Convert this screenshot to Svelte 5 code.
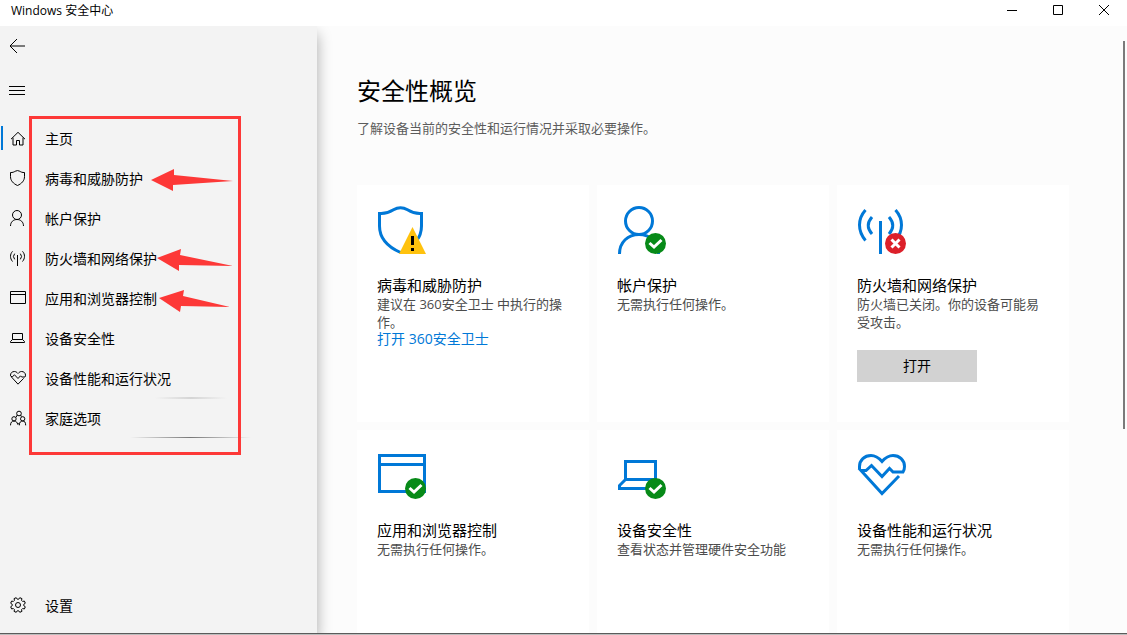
<script lang="ts">
	type Badge = 'warn' | 'ok' | 'error' | '';

	// outline icons, all on a 48 unit grid
	const icons: Record<string, string> = {
		home: 'M3 27.5L24 7L45 27.5M9 23V45H19.5V31.5H28.5V45H39V23',
		shield: 'M1.5 7.5C8 8 12 6 15.5 3.8Q22.5 -0.5 29.5 3.8C33 6 37 8 43.5 7.5V20C43.5 32 35 41 22.5 46.5C10 41 1.5 32 1.5 20Z',
		person: 'M21 1.5A13.5 13.5 0 1 1 21 28.5A13.5 13.5 0 1 1 21 1.5ZM1.5 48C1.5 36 10 28.5 21 28.5S40.5 36 40.5 48',
		network: 'M22.5 15V48M14 11Q6.5 19.5 14 28M31 11Q38.5 19.5 31 28M7.5 4C-0.5 13 -0.5 25 7.5 34.5M37.5 4C45.5 13 45.5 25 37.5 34.5',
		browser: 'M1.5 4.5H46.5V40.5H1.5ZM1.5 13.5H46.5',
		laptop: 'M7.5 28.5V10.5H37.5V28.5ZM7.5 28.5L1.5 34.5V37.5H43.5V34.5L37.5 28.5',
		heart: 'M1.5 18V15.5C1.5 9 6.5 4.5 13 4.5C17 4.5 20 6 24 10.5C28 6 31 4.5 35 4.5C41.5 4.5 46.5 9 46.5 15.5C46.5 18 46 19.5 45 21H35L31.5 17.5L24 25.5L13.5 14.5L8 19.5H3L24 42.5L41 25',
		family: 'M27 3.5A7 7 0 1 1 27 17.5A7 7 0 1 1 27 3.5ZM12 20A6.5 6.5 0 1 1 12 33A6.5 6.5 0 1 1 12 20ZM38 20A6.5 6.5 0 1 1 38 33A6.5 6.5 0 1 1 38 20ZM1.5 46C1.5 37 6 33 12 33S22 37 23 43M28 46C28 37 32 33 38 33S47 37 47 46M22 15L18 22M32 15L34 20M23 43L28 40',
		gear: cog(8) + 'M24 16.5A7.5 7.5 0 1 1 24 31.5A7.5 7.5 0 1 1 24 16.5Z'
	};

	function cog(teeth: number) {
		const step = (Math.PI * 2) / teeth;
		const points: string[] = [];
		for (let i = 0; i < teeth; i++) {
			for (const [offset, r] of [[-0.34, 17.5], [-0.2, 22.5], [0.2, 22.5], [0.34, 17.5]]) {
				const a = (i + 0.5 + offset) * step;
				points.push(`${(24 + r * Math.cos(a)).toFixed(1)} ${(24 + r * Math.sin(a)).toFixed(1)}`);
			}
		}
		return `M${points.join('L')}Z`;
	}

	const nav = [
		{ icon: 'home', label: '主页' },
		{ icon: 'shield', label: '病毒和威胁防护' },
		{ icon: 'person', label: '帐户保护' },
		{ icon: 'network', label: '防火墙和网络保护' },
		{ icon: 'browser', label: '应用和浏览器控制' },
		{ icon: 'laptop', label: '设备安全性' },
		{ icon: 'heart', label: '设备性能和运行状况' },
		{ icon: 'family', label: '家庭选项' }
	];

	const cards: { icon: string; badge: Badge; title: string; text: string; link?: string; action?: string }[] = [
		{ icon: 'shield', badge: 'warn', title: '病毒和威胁防护', text: '建议在 360安全卫士 中执行的操作。', link: '打开 360安全卫士' },
		{ icon: 'person', badge: 'ok', title: '帐户保护', text: '无需执行任何操作。' },
		{ icon: 'network', badge: 'error', title: '防火墙和网络保护', text: '防火墙已关闭。你的设备可能易受攻击。', action: '打开' },
		{ icon: 'browser', badge: 'ok', title: '应用和浏览器控制', text: '无需执行任何操作。' },
		{ icon: 'laptop', badge: 'ok', title: '设备安全性', text: '查看状态并管理硬件安全功能' },
		{ icon: 'heart', badge: '', title: '设备性能和运行状况', text: '无需执行任何操作。' }
	];

	let current = $state('home');
</script>

{#snippet glyph(name: string)}
	<svg class="glyph" viewBox="0 0 48 48" aria-hidden="true"><path d={icons[name]} /></svg>
{/snippet}

<div class="window">
	<header>
		<span class="caption">Windows 安全中心</span>
		<div class="controls">
			<button aria-label="最小化"><svg viewBox="0 0 10 10"><path d="M0 5.5H10" /></svg></button>
			<button aria-label="最大化"><svg viewBox="0 0 10 10"><path d="M.5 .5H9.5V9.5H.5Z" /></svg></button>
			<button aria-label="关闭"><svg viewBox="0 0 10 10"><path d="M0 0L10 10M10 0L0 10" /></svg></button>
		</div>
	</header>

	<div class="body">
		<aside>
			<button class="tool" aria-label="后退">
				<svg viewBox="0 0 16 16"><path d="M16 8H1M8 1L1 8L8 15" /></svg>
			</button>
			<button class="tool" aria-label="菜单">
				<svg viewBox="0 0 16 16"><path d="M0 4.5H16M0 8.5H16M0 12.5H16" /></svg>
			</button>

			<nav>
				{#each nav as item}
					<a href="#{item.icon}" class:active={current === item.icon} onclick={() => (current = item.icon)}>
						{@render glyph(item.icon)}
						<span>{item.label}</span>
					</a>
				{/each}

				<svg class="marks" viewBox="0 0 222 339" aria-hidden="true">
					<defs>
						<linearGradient id="streak">
							<stop offset="0" stop-color="#777" stop-opacity="0" />
							<stop offset=".5" stop-color="#777" />
							<stop offset="1" stop-color="#777" stop-opacity="0" />
						</linearGradient>
					</defs>
					<rect x="126" y="281" width="72" height="2" fill="url(#streak)" opacity=".25" />
					<rect x="101" y="321" width="121" height="1" fill="url(#streak)" />
					<rect x="1.5" y="1.5" width="209" height="336" fill="none" stroke="#fd3837" stroke-width="3" />
					<g fill="#fd3837">
						<path d="M122 64L145 53V59L204 65L144 69V75Z" />
						<path d="M128 142L152 133L151 139L204 150L150 149V155Z" />
						<path d="M130 182L155 174L154 180L201 191L152 190L151 196Z" />
					</g>
				</svg>
			</nav>

			<a class="settings" href="#gear">
				{@render glyph('gear')}
				<span>设置</span>
			</a>
		</aside>

		<main>
			<div class="scroll">
				<h1>安全性概览</h1>
				<p class="intro">了解设备当前的安全性和运行情况并采取必要操作。</p>

				<div class="grid">
					{#each cards as card}
						<section>
							<svg class="big" viewBox="-1 0 50 48" aria-hidden="true">
								<path d={icons[card.icon]} />
								{#if card.badge === 'warn'}
									<path class="warn" d="M34.5 21L48 48H21Z" />
									<path class="bang" d="M33 30H36V39H33ZM33 42H36V45H33Z" />
								{:else if card.badge}
									<circle class={card.badge} cx="37.5" cy="37.5" r="10.5" />
									<path class="sign" d={card.badge === 'ok' ? 'M31.5 37L36 41L43.5 34' : 'M33.5 33.5L41.5 41.5M41.5 33.5L33.5 41.5'} />
								{/if}
							</svg>
							<h2>{card.title}</h2>
							<p>{card.text}</p>
							{#if card.link}
								<a href="#open">{card.link}</a>
							{/if}
							{#if card.action}
								<button class="action">{card.action}</button>
							{/if}
						</section>
					{/each}
				</div>
			</div>
			<div class="thumb"></div>
		</main>
	</div>
</div>

<style>
	:global(body) {
		margin: 0;
	}
	.window {
		display: flex;
		flex-direction: column;
		box-sizing: border-box;
		height: 100vh;
		border-bottom: 1px solid #bdbdbd;
		background: #fff;
		color: #000;
		font-family: "Open Sans", "Noto Sans CJK SC", sans-serif;
		font-size: 14px;
		font-weight: 400;
	}
	h1, h2, p {
		margin: 0;
		font-weight: inherit;
	}
	a {
		color: inherit;
		text-decoration: none;
	}
	button {
		padding: 0;
		border: none;
		background: none;
		color: inherit;
		font: inherit;
		cursor: pointer;
	}
	svg {
		display: block;
		fill: none;
		stroke: #000;
	}

	header {
		display: flex;
		justify-content: space-between;
		height: 26px;
	}
	.caption {
		padding-left: 11px;
		font-size: 12px;
		line-height: 22px;
	}
	.controls {
		display: flex;
	}
	.controls button {
		display: grid;
		place-items: center;
		width: 46px;
		height: 20px;
	}
	.controls svg {
		width: 10px;
		height: 10px;
	}

	.body {
		display: flex;
		flex: 1;
		min-height: 0;
		border-bottom: 1px solid #5b5b5b;
	}
	aside {
		display: flex;
		flex-direction: column;
		flex: none;
		box-sizing: border-box;
		width: 317px;
		padding-bottom: 8px;
		background: #f3f3f3;
		box-shadow: 0 8px 14px #0005;
		clip-path: inset(0 -40px 0 0);
		z-index: 1;
	}
	.tool {
		display: flex;
		align-items: center;
		width: 48px;
		height: 40px;
		margin-bottom: 4px;
		padding-left: 9px;
	}
	.tool svg {
		width: 16px;
		height: 16px;
	}
	nav {
		position: relative;
		margin-top: 4px;
	}
	nav a, .settings {
		display: flex;
		align-items: center;
		gap: 19px;
		height: 40px;
		padding-left: 10px;
	}
	.glyph {
		width: 16px;
		height: 16px;
		overflow: visible;
		stroke-width: 3;
	}
	.active {
		background: linear-gradient(#0078d7, #0078d7) 1px center / 2px 24px no-repeat;
	}
	.settings {
		margin-top: auto;
	}
	.marks {
		position: absolute;
		top: -2px;
		left: 29px;
		width: 222px;
		height: 339px;
		stroke: none;
		pointer-events: none;
	}

	main {
		position: relative;
		flex: 1;
		min-width: 0;
		background: #fcfcfc;
	}
	.scroll {
		box-sizing: border-box;
		height: 100%;
		padding: 50px 58px 0 40px;
		overflow-y: auto;
		scrollbar-width: none;
	}
	.thumb {
		position: absolute;
		top: 15px;
		right: 2px;
		width: 2px;
		height: 64%;
		background: #7a7a7a;
	}
	h1 {
		font-size: 24px;
		line-height: 30px;
	}
	.intro {
		margin-top: 13px;
		color: #5c5c5c;
		font-size: 13px;
		line-height: 18px;
	}
	.grid {
		display: grid;
		grid-template-columns: repeat(3, 1fr);
		gap: 8px;
		margin-top: 48px;
	}
	section {
		box-sizing: border-box;
		min-height: 237px;
		padding: 21px 20px;
		background: #fff;
	}
	.big {
		width: 50px;
		height: 48px;
		margin-bottom: 21px;
		stroke: #0078d7;
		stroke-width: 3;
	}
	.big .warn {
		fill: #ffc20e;
		stroke: none;
	}
	.big .bang {
		fill: #000;
		stroke: none;
	}
	.big .ok {
		fill: #078a18;
		stroke: none;
	}
	.big .error {
		fill: #dc202a;
		stroke: none;
	}
	.big .sign {
		stroke: #fff;
	}
	h2 {
		font-size: 15px;
		line-height: 20px;
	}
	section p {
		color: #4c4c4c;
		font-size: 13px;
		line-height: 18px;
	}
	section a {
		display: block;
		color: #0078d7;
		line-height: 16px;
	}
	.action {
		display: block;
		width: 120px;
		height: 32px;
		margin-top: 19px;
		padding-bottom: 2px;
		background: #d2d2d2;
	}
</style>
